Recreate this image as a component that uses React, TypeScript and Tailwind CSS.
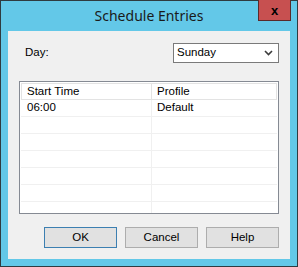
import React from "react";

const rows = [
  { time: "06:00", profile: "Default" },
  { time: "", profile: "" },
  { time: "", profile: "" },
  { time: "", profile: "" },
  { time: "", profile: "" },
  { time: "", profile: "" },
  { time: "", profile: "" },
];

const Chevron = () => (
  <svg width="9" height="6" viewBox="0 0 9 6" className="block">
    <path d="M1 1 L4.5 4.5 L8 1" fill="none" stroke="#3c3c3c" strokeWidth="1.6" />
  </svg>
);

const DialogButton: React.FC<{ label: string; primary?: boolean }> = ({ label, primary }) => (
  <button
    className={`w-[73px] h-[21px] bg-[#e1e1e1] border text-[11.5px] text-black leading-none ${
      primary ? "border-[#3c7fb1]" : "border-[#adadad]"
    }`}
  >
    {label}
  </button>
);

export default function App() {
  return (
    <div
      className="w-[298px] h-[267px] bg-[#63c8e8] border border-[#2f3b40] flex flex-col"
      style={{ fontFamily: "'Liberation Sans', Arial, sans-serif" }}
    >
      {/* title bar */}
      <div className="relative h-[30px] shrink-0 flex items-center justify-center">
        <span
          className="text-[14px] text-[#1a1a1a] pb-[1px]"
          style={{ fontFamily: "'Noto Sans', 'Open Sans', sans-serif" }}
        >
          Schedule Entries
        </span>
        <div className="absolute right-[6px] -top-px w-[33px] h-[21px] bg-[#c75050] border border-[#5a2a2a] border-t-0 flex items-center justify-center">
          <span className="text-[13px] font-bold text-black leading-none">x</span>
        </div>
      </div>

      {/* client area */}
      <div className="mx-[7px] h-[228px] bg-[#f0f0f0] flex flex-col px-[11px] pt-[12px] text-[11.5px] text-black">
        <div className="flex items-center justify-between h-[20px]">
          <span className="pl-[6px]">Day:</span>
          <div className="w-[106px] h-[20px] bg-white border border-[#7a7a7a] flex items-center justify-between pl-[3px] pr-[5px]">
            <span>Sunday</span>
            <Chevron />
          </div>
        </div>

        <div className="mt-[18px] h-[133px] bg-white border border-[#858a93] p-px overflow-hidden">
          <div className="flex h-[17px] border border-[#e3e3e3]">
            <div className="w-[130px] border-r border-[#e3e3e3] pl-[5px] flex items-center">Start Time</div>
            <div className="flex-1 pl-[5px] flex items-center">Profile</div>
          </div>
          {rows.map((r, i) => (
            <div key={i} className="flex h-[17px] border-b border-[#f0f0f0]">
              <div className="w-[131px] border-r border-[#f0f0f0] pl-[6px] flex items-center">{r.time}</div>
              <div className="flex-1 pl-[5px] flex items-center">{r.profile}</div>
            </div>
          ))}
        </div>

        <div className="mt-[13px] flex justify-end gap-[8px]">
          <DialogButton label="OK" primary />
          <DialogButton label="Cancel" />
          <DialogButton label="Help" />
        </div>
      </div>
    </div>
  );
}
